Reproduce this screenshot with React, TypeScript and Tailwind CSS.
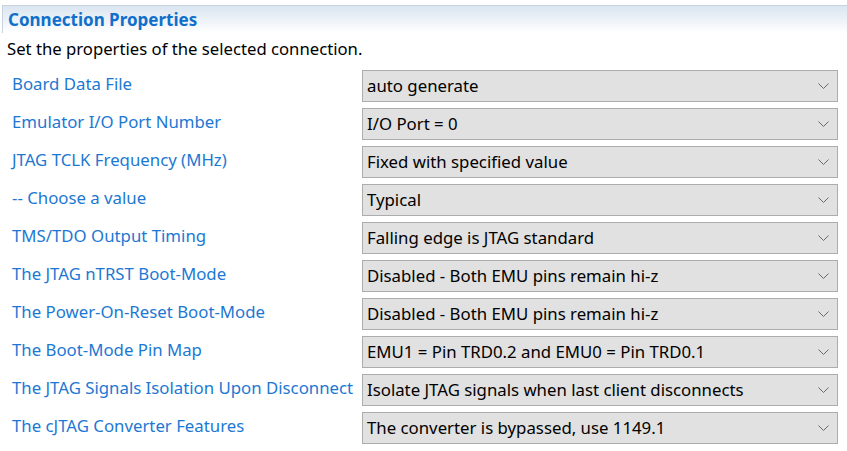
const ROWS = [
  { label: 'Board Data File', value: 'auto generate' },
  { label: 'Emulator I/O Port Number', value: 'I/O Port = 0' },
  { label: 'JTAG TCLK Frequency (MHz)', value: 'Fixed with specified value' },
  { label: '-- Choose a value', value: 'Typical' },
  { label: 'TMS/TDO Output Timing', value: 'Falling edge is JTAG standard' },
  { label: 'The JTAG nTRST Boot-Mode', value: 'Disabled - Both EMU pins remain hi-z' },
  { label: 'The Power-On-Reset Boot-Mode', value: 'Disabled - Both EMU pins remain hi-z' },
  { label: 'The Boot-Mode Pin Map', value: 'EMU1 = Pin TRD0.2 and EMU0 = Pin TRD0.1' },
  { label: 'The JTAG Signals Isolation Upon Disconnect', value: 'Isolate JTAG signals when last client disconnects' },
  { label: 'The cJTAG Converter Features', value: 'The converter is bypassed, use 1149.1' },
];

function Chevron() {
  return (
    <svg width="11" height="6" viewBox="0 0 11 6" className="shrink-0">
      <polyline points="0.5,0.5 5.5,5.5 10.5,0.5" fill="none" stroke="#6a6a6a" strokeWidth="1" />
    </svg>
  );
}

export default function App() {
  return (
    <div className="w-[847px] h-[451px] bg-white overflow-hidden" style={{ fontFamily: '"Noto Sans", "Open Sans", sans-serif' }}>
      {/* Section header band */}
      <div className="mt-[5px] ml-[2px] h-[28px] border-t border-l border-[#c6d3e0] bg-gradient-to-b from-[#dae5f0] to-white pl-[5px] flex items-center">
        <span className="text-[17px] font-bold text-[#0f6fcb]">Connection Properties</span>
      </div>

      <div className="px-[7px] pt-[5px] text-[16.7px] text-black leading-[22px]">
        Set the properties of the selected connection.
      </div>

      <div className="mt-[10px] flex flex-col gap-[6px]">
        {ROWS.map((row) => (
          <div key={row.label} className="flex items-start h-[32px]">
            <div className="w-[362px] pl-[12px] pt-[3px] text-[16.8px] leading-[22px] text-[#1c78d3] whitespace-nowrap">
              {row.label}
            </div>
            <div className="w-[476px] h-[32px] border border-[#adadad] bg-[#e1e1e1] flex items-center justify-between pl-[4px] pr-[8px]">
              <span className="text-[16.8px] text-black whitespace-nowrap">{row.value}</span>
              <Chevron />
            </div>
          </div>
        ))}
      </div>
    </div>
  );
}
